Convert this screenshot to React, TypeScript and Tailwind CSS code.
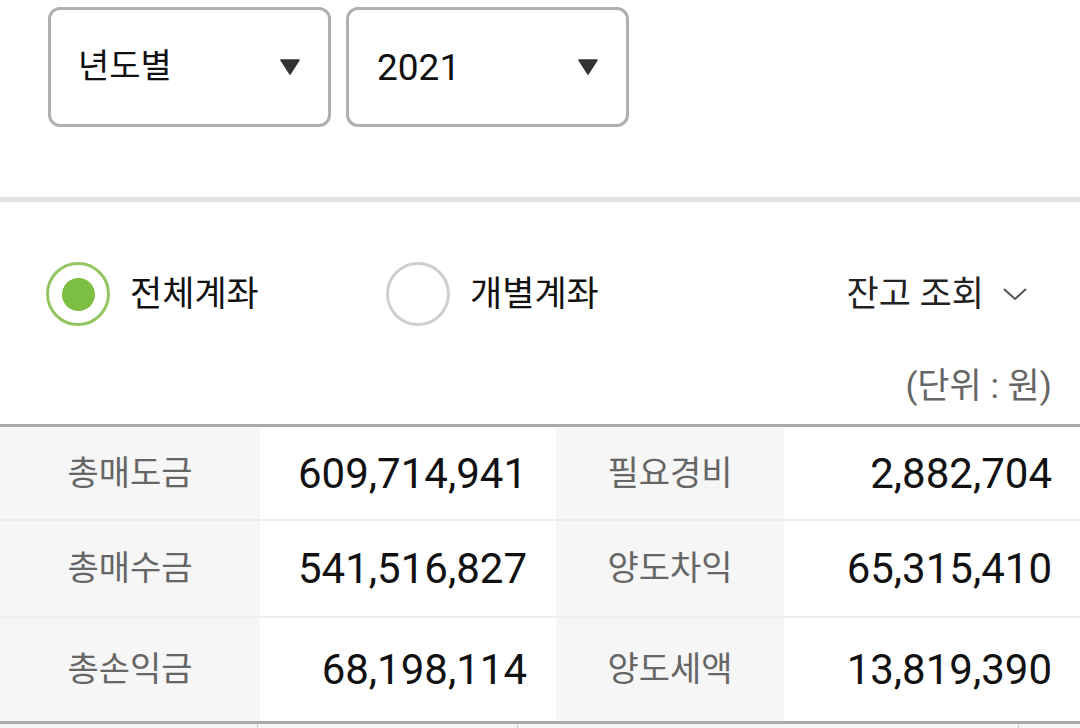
const FONT = "font-['Roboto','Noto_Sans_CJK_KR',sans-serif]";

const rows = [
  { l1: '총매도금', v1: '609,714,941', l2: '필요경비', v2: '2,882,704', h: 'h-[94px]' },
  { l1: '총매수금', v1: '541,516,827', l2: '양도차익', v2: '65,315,410', h: 'h-[97px]' },
  { l1: '총손익금', v1: '68,198,114', l2: '양도세액', v2: '13,819,390', h: 'h-[106px]' },
];

function Select({ label, num }: { label: string; num?: boolean }) {
  return (
    <div className="w-[283px] h-[120px] border-[3px] border-[#b0b0b0] rounded-[12px] flex items-center justify-between pl-[27px] pr-[28px]">
      <span className={num ? 'text-[37px] leading-none text-[#111] pl-[1px]' : 'text-[34px] leading-none text-[#111] pb-[2px]'}>{label}</span>
      <svg width="20" height="16" viewBox="0 0 20 16">
        <path d="M1 1 L19 1 L10 15 Z" fill="#333" stroke="#333" strokeWidth="1.5" strokeLinejoin="round" />
      </svg>
    </div>
  );
}

function Radio({ label, checked }: { label: string; checked?: boolean }) {
  return (
    <div className="flex items-center gap-[20px]">
      <div
        className={
          checked
            ? 'w-[64px] h-[64px] rounded-full border-[3px] border-[#93c660] flex items-center justify-center'
            : 'w-[64px] h-[64px] rounded-full border-[3px] border-[#cfcfcf]'
        }
      >
        {checked && <div className="w-[33px] h-[33px] rounded-full bg-[#7dbf43]" />}
      </div>
      <span className="text-[35px] leading-none text-[#111]">{label}</span>
    </div>
  );
}

export default function App() {
  return (
    <div className={`w-[1080px] h-[728px] bg-white overflow-hidden ${FONT}`}>
      <div className="h-[197px] pt-[7px] pl-[48px] flex gap-[15px] items-start">
        <Select label="년도별" />
        <Select label="2021" num />
      </div>
      <div className="h-[5px] bg-[#e2e2e2]" />

      <div className="pt-[60px] pl-[46px] pr-[52px] flex items-center">
        <div className="w-[340px]">
          <Radio label="전체계좌" checked />
        </div>
        <Radio label="개별계좌" />
        <div className="ml-auto flex items-center gap-[18px]">
          <span className="text-[35px] leading-none text-[#222]">잔고 조회</span>
          <svg width="26" height="16" viewBox="0 0 26 16">
            <path d="M2 3 L13 13 L24 3" fill="none" stroke="#555" strokeWidth="2" />
          </svg>
        </div>
      </div>

      <div className="mt-[41px] pr-[28px] text-right text-[35px] leading-[40px] text-[#666]">(단위 : 원)</div>

      <div className="mt-[17px] border-t-[3px] border-[#aaa]">
        {rows.map((r, i) => (
          <div
            key={i}
            className={`grid grid-cols-[260px_296px_228px_1fr] ${r.h} ${i < rows.length - 1 ? 'border-b-2 border-[#eeeeee]' : 'border-b-[3px] border-[#aaa]'}`}
          >
            <div className="bg-[#f6f6f6] flex items-center justify-center text-[34px] text-[#666]">{r.l1}</div>
            <div className="flex items-center justify-end pr-[29px] text-[42px] text-[#111]">{r.v1}</div>
            <div className="bg-[#f6f6f6] flex items-center justify-center text-[34px] text-[#666]">{r.l2}</div>
            <div className="flex items-center justify-end pr-[28px] text-[42px] text-[#111]">{r.v2}</div>
          </div>
        ))}
        <div className="grid grid-cols-[258px_260px_501px_1fr] h-[10px] bg-[#f6f6f6]">
          <div className="border-r border-[#ccc]" />
          <div className="border-r border-[#ccc]" />
          <div className="border-r border-[#ccc]" />
          <div />
        </div>
      </div>
    </div>
  );
}
